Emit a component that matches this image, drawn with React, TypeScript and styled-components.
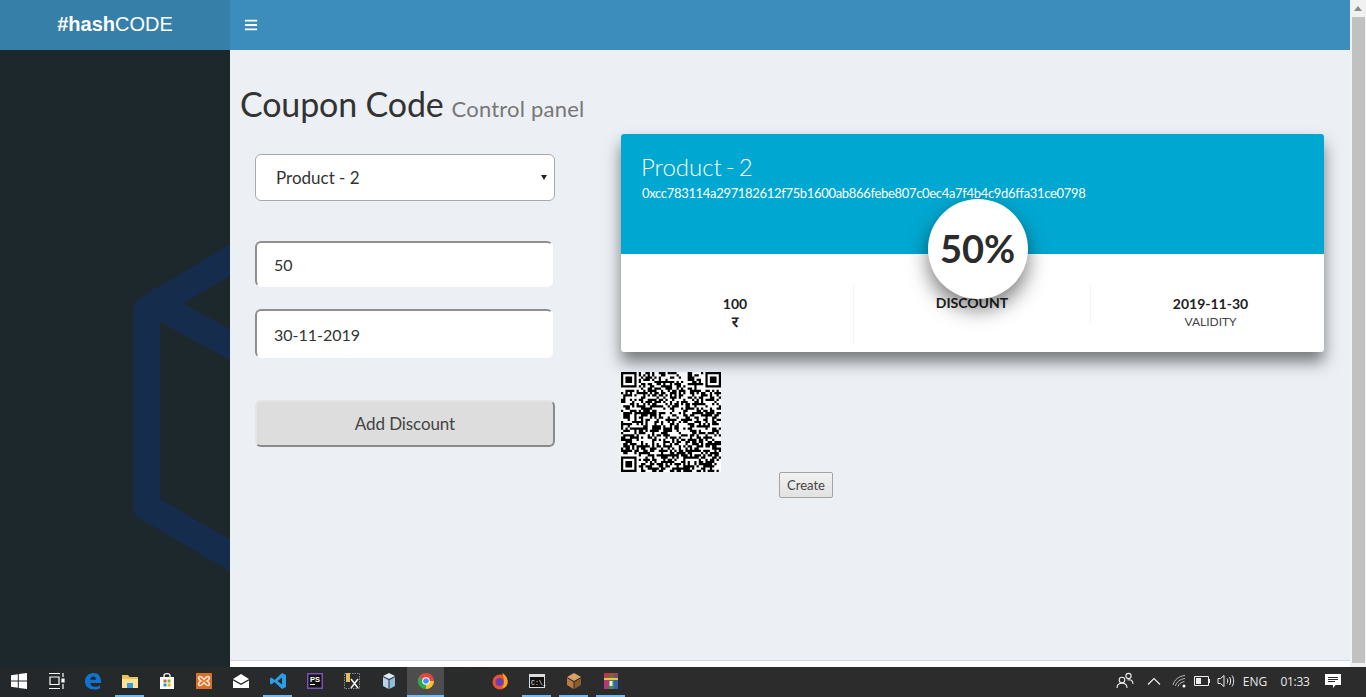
import React from 'react';
import styled, { createGlobalStyle } from 'styled-components';
import { FaBars } from 'react-icons/fa';

const GlobalStyle = createGlobalStyle`
  html, body {
    margin: 0;
    padding: 0;
    overflow: hidden;
  }
  * {
    box-sizing: border-box;
  }
  body {
    font-family: 'Lato', 'Liberation Sans', sans-serif;
    color: #333;
  }
`;

const Page = styled.div`
  display: flex;
  flex-direction: column;
  width: 1366px;
  height: 697px;
  overflow: hidden;
`;

const Screen = styled.div`
  display: flex;
  flex: 1;
  min-height: 0;
`;

const Viewport = styled.div`
  display: flex;
  flex: 1;
  flex-direction: column;
  min-width: 0;
`;

const Header = styled.header`
  display: flex;
  flex: 0 0 50px;
  background: #3c8dbc;
`;

const Logo = styled.div`
  flex: 0 0 230px;
  background: #367fa9;
  color: #fff;
  font-family: 'Liberation Sans', Arial, sans-serif;
  font-size: 20px;
  line-height: 49px;
  text-align: center;
  b {
    font-weight: 700;
  }
`;

const MenuToggle = styled.div`
  display: flex;
  align-items: center;
  padding-left: 14px;
  color: #fff;
  font-size: 14px;
`;

const Body = styled.div`
  display: flex;
  flex: 1;
  min-height: 0;
`;

const Sidebar = styled.aside`
  position: relative;
  flex: 0 0 230px;
  overflow: hidden;
  background: #1d282d;
`;

const SidebarMark = styled.svg`
  position: absolute;
  top: -50px;
  left: 0;
`;

const Main = styled.main`
  display: flex;
  flex: 1;
  flex-direction: column;
  min-width: 0;
  background: #ecf0f5;
`;

const Content = styled.section`
  flex: 1;
  padding: 34px 26px 0 10px;
`;

const Title = styled.h1`
  margin: 0;
  height: 50px;
  color: #333;
  font-size: 34px;
  font-weight: 400;
  letter-spacing: -0.15px;
  line-height: 40px;
  small {
    margin-left: 8px;
    color: #777;
    font-size: 22px;
    font-weight: 400;
    letter-spacing: 0.2px;
  }
`;

const Columns = styled.div`
  display: flex;
`;

const FormColumn = styled.div`
  flex: 0 0 381px;
  padding: 20px 0 0 15px;
`;

const SelectWrap = styled.div`
  position: relative;
  width: 300px;
  &::after {
    content: '';
    position: absolute;
    top: 21px;
    right: 8px;
    border-top: 5px solid #222;
    border-left: 3px solid transparent;
    border-right: 3px solid transparent;
    pointer-events: none;
  }
`;

const ProductSelect = styled.select`
  display: block;
  width: 100%;
  height: 47px;
  padding: 0 20px;
  border: 1px solid #a9a9a9;
  border-radius: 6px;
  background: #fff;
  color: #333;
  font-family: inherit;
  font-size: 17px;
  appearance: none;
`;

const TextInput = styled.input<{ $height: number; $top: number; $nudge?: number }>`
  display: block;
  width: 298px;
  height: ${({ $height }) => $height}px;
  margin-top: ${({ $top }) => $top}px;
  padding: ${({ $nudge }) => $nudge ?? 0}px 17px 0;
  border-width: 2px;
  border-style: solid;
  border-color: #8f8f8f #fff #fff #8f8f8f;
  border-radius: 6px;
  background: #fff;
  color: #333;
  font-family: inherit;
  font-size: 16px;
  outline: none;
`;

const SubmitButton = styled.button`
  display: block;
  width: 300px;
  height: 47px;
  margin-top: 42px;
  padding: 0;
  border-width: 2px;
  border-style: solid;
  border-color: #e4e4e4 #8a8a8a #8a8a8a #e4e4e4;
  border-radius: 6px;
  background: #dddddd;
  color: #444;
  font-family: inherit;
  font-size: 17px;
  letter-spacing: -0.1px;
`;

const CouponColumn = styled.div`
  flex: 0 0 703px;
`;

const Card = styled.article`
  position: relative;
  height: 218px;
  border-radius: 3px;
  background: #fff;
  box-shadow: 0 10px 16px rgba(0, 0, 0, 0.5);
`;

const CardTop = styled.div`
  height: 120px;
  padding: 19px 21px;
  border-radius: 3px 3px 0 0;
  background: #00a7d0;
  color: #fff;
`;

const CardName = styled.h3`
  margin: 0 0 5px -1px;
  font-size: 24px;
  font-weight: 300;
  line-height: 28px;
  word-spacing: -2.5px;
`;

const CardHash = styled.h5`
  margin: 0;
  font-size: 13px;
  font-weight: 400;
  letter-spacing: -0.32px;
  line-height: 15px;
`;

const DiscountBadge = styled.div`
  position: absolute;
  top: 65px;
  left: 50%;
  display: flex;
  align-items: center;
  justify-content: center;
  width: 100px;
  height: 100px;
  margin-left: -45px;
  padding-bottom: 3px;
  border-radius: 50%;
  background: #fff;
  box-shadow: 0 10px 20px rgba(0, 0, 0, 0.5);
  color: #2b2b2b;
  font-size: 38px;
  font-weight: 700;
`;

const CardStats = styled.div`
  display: flex;
  align-items: flex-start;
  padding-top: 31px;
`;

const Stat = styled.div<{ $divider?: boolean; $height: number; $width: number; $left?: number; $right?: number }>`
  flex: 0 0 ${({ $width }) => $width}px;
  height: ${({ $height }) => $height}px;
  padding: 0 ${({ $right }) => $right ?? 0}px 0 ${({ $left }) => $left ?? 0}px;
  border-right: ${({ $divider }) => ($divider ? '1px solid #f4f4f4' : 'none')};
  text-align: center;
`;

const StatValue = styled.h5`
  margin: 11px 0 0;
  color: #222;
  font-size: 14px;
  font-weight: 700;
  line-height: 16px;
`;

const DiscountValue = styled(StatValue)`
  margin-top: 10px;
`;

const StatLabel = styled.span`
  display: block;
  margin-top: 1px;
  color: #444;
  font-size: 12px;
  line-height: 18px;
`;

const Currency = styled(StatLabel)`
  margin-top: 0;
  color: #222;
  font-size: 15px;
  font-weight: 700;
`;

const QrRow = styled.div`
  display: flex;
  align-items: flex-start;
  margin-top: 20px;
`;

const CreateButton = styled.button`
  width: 54px;
  height: 26px;
  margin: 100px 0 0 58px;
  padding: 0;
  border: 1px solid #a4a4a4;
  border-radius: 2px;
  background: linear-gradient(#f2f2f2, #e2e2e2);
  color: #444;
  font-family: inherit;
  font-size: 13px;
`;

const Footer = styled.footer`
  flex: 0 0 7px;
  border-top: 1px solid #d2d6de;
  background: #fff;
`;

const Scrollbar = styled.div`
  display: flex;
  flex: 0 0 16px;
  flex-direction: column;
  align-items: center;
  background: #f1f1f1;
`;

const ScrollArrow = styled.div`
  flex: 0 0 17px;
  padding-top: 6px;
  &::before {
    content: '';
    display: block;
    border-bottom: 5px solid #8a8a8a;
    border-left: 4px solid transparent;
    border-right: 4px solid transparent;
  }
`;

const ScrollThumb = styled.div`
  flex: 1;
  width: 13px;
  margin-bottom: 4px;
  background: #c1c1c1;
`;

const Taskbar = styled.div`
  display: flex;
  flex: 0 0 30px;
  align-items: stretch;
  background: linear-gradient(90deg, #24282a, #2c2c2c 40%);
  color: #e8e8e8;
`;

const TaskButton = styled.div<{ $active?: boolean; $open?: boolean }>`
  position: relative;
  display: flex;
  flex: 0 0 37px;
  align-items: center;
  justify-content: center;
  padding-bottom: 2px;
  background: ${({ $active }) => ($active ? '#4d4d4d' : 'transparent')};
  &::after {
    content: '';
    position: absolute;
    bottom: 0;
    left: ${({ $active }) => ($active ? '0' : '4px')};
    right: ${({ $active }) => ($active ? '0' : '4px')};
    height: 2px;
    background: ${({ $active, $open }) => ($active || $open ? '#76b9ed' : 'transparent')};
  }
`;

const Tray = styled.div`
  display: flex;
  align-items: center;
  margin-left: auto;
  padding: 0 18px 2px 0;
  font-family: 'Open Sans', 'Liberation Sans', sans-serif;
  font-size: 12px;
`;

const TrayIcon = styled.div<{ $width: number }>`
  display: flex;
  flex: 0 0 ${({ $width }) => $width}px;
  align-items: center;
  justify-content: center;
`;

const TrayText = styled.span<{ $width: number }>`
  flex: 0 0 ${({ $width }) => $width}px;
  text-align: center;
`;

const TrayClock = styled(TrayText)`
  letter-spacing: -0.3px;
`;

const icon = { width: 18, height: 18, viewBox: '0 0 18 18' };

const WindowsIcon = () => (
  <svg {...icon} fill="#fff">
    <path d="M1 3.2 7.8 2.2V8.5H1ZM8.8 2 17 1V8.5H8.8ZM1 9.5H7.8V15.8L1 14.8ZM8.8 9.5H17V17L8.8 16Z" />
  </svg>
);

const TaskViewIcon = () => (
  <svg {...icon} fill="none" stroke="#fff" strokeWidth="1.2">
    <path d="M2 1.5H13M2 16.5H13M3 5H12V12.5H3Z" />
    <path d="M16 1V5M16 12V17" />
    <path d="M15 7H17V10H15Z" fill="#fff" />
  </svg>
);

const EdgeIcon = () => (
  <svg {...icon}>
    <path
      fill="#1173cf"
      d="M1 9.5C1 4.5 4.5 1 9.5 1 14 1 17 4.3 17 9.5V11H6.2C6.5 13.6 8.4 14.8 10.8 14.8 12.8 14.8 14.5 14.2 16 13.2V16.2C14.5 17 12.6 17.5 10.3 17.5 4.6 17.5 1 14.4 1 9.5ZM6.2 7.8H12C12 5.8 11 4.6 9.2 4.6 7.5 4.6 6.5 5.9 6.2 7.8Z"
    />
  </svg>
);

const FolderIcon = () => (
  <svg {...icon}>
    <path fill="#e8c25a" d="M1 3H7L8.5 5H17V16H1Z" />
    <path fill="#fbe39a" d="M1 7H17V16H1Z" />
    <path fill="#3f9bd6" d="M6 11H12V16H6Z" />
  </svg>
);

const StoreIcon = () => (
  <svg {...icon}>
    <path fill="none" stroke="#fff" strokeWidth="1.3" d="M6 5V3.5C6 1 12 1 12 3.5V5" />
    <path fill="#fff" d="M2 5H16V17H2Z" />
    <path fill="#e8562a" d="M5.5 7.5H8.5V10.5H5.5Z" />
    <path fill="#7cb82f" d="M9.5 7.5H12.5V10.5H9.5Z" />
    <path fill="#1a9be0" d="M5.5 11.5H8.5V14.5H5.5Z" />
    <path fill="#f7b500" d="M9.5 11.5H12.5V14.5H9.5Z" />
  </svg>
);

const XamppIcon = () => (
  <svg {...icon}>
    <path fill="#d9702a" d="M1 1H17V17H1Z" />
    <path
      fill="none"
      stroke="#fbe3cf"
      strokeWidth="1.6"
      d="M5 4.5C7 4.5 7.5 6 9 7.5 10.5 6 11 4.5 13 4.5 15 4.5 15 7.5 12 9 15 10.5 15 13.5 13 13.5 11 13.5 10.5 12 9 10.5 7.5 12 7 13.5 5 13.5 3 13.5 3 10.5 6 9 3 7.5 3 4.5 5 4.5Z"
    />
  </svg>
);

const MailIcon = () => (
  <svg {...icon} fill="#fff">
    <path d="M1 7 9 2 17 7 9 11.5Z" />
    <path d="M1 8.5 9 13 17 8.5V16H1Z" />
  </svg>
);

const CodeIcon = () => (
  <svg {...icon}>
    <path fill="#2b9fe6" d="M13 1 17 3V15L13 17 5.5 10 2.5 12.5 1 11.5V6.5L2.5 5.5 5.5 8ZM13 5.5 8.5 9 13 12.5Z" />
  </svg>
);

const StormIcon = () => (
  <svg {...icon}>
    <path fill="#7a4fb8" d="M1 1H17V17H1Z" />
    <path fill="#111" d="M2.5 2.5H15.5V15.5H2.5Z" />
    <text x="4" y="10" fill="#fff" fontFamily="Liberation Sans" fontSize="7.5" fontWeight="700">
      PS
    </text>
    <path fill="#fff" d="M4 12H9V13H4Z" />
  </svg>
);

const ToolsIcon = () => (
  <svg {...icon}>
    <path fill="none" stroke="#888" strokeDasharray="1.5 1" d="M1.5 1.5H16.5V16.5H1.5Z" />
    <path fill="#e2bf5f" d="M3 1H7V10H3Z" />
    <path stroke="#eee" strokeWidth="1.6" d="M8 7 15 16M15 7 8 16" />
  </svg>
);

const CubeIcon = () => (
  <svg {...icon}>
    <path fill="#dbeaf5" d="M9 1 15 4 9 7 3 4Z" />
    <path fill="#b5d4ea" d="M3 5 8.5 8V17L3 14Z" />
    <path fill="#8dbcdc" d="M15 5 9.5 8V17L15 14Z" />
  </svg>
);

const ChromeIcon = () => (
  <svg {...icon}>
    <circle cx="9" cy="9" r="8" fill="#e2493b" />
    <path fill="#31a853" d="M9 17A8 8 0 0 1 2 5L9 9Z" />
    <path fill="#f7c52b" d="M9 9 17 9A8 8 0 0 1 9 17Z" />
    <circle cx="9" cy="9" r="3.8" fill="#fff" />
    <circle cx="9" cy="9" r="2.8" fill="#4a8af4" />
  </svg>
);

const FirefoxIcon = () => (
  <svg {...icon}>
    <circle cx="9" cy="10" r="7.5" fill="#e8552d" />
    <path fill="#f9a51e" d="M11 1C15 3 17.5 7 16.5 11.5 15.5 15 13 16 11 16 14 13 13.5 6 11 1Z" />
    <circle cx="8.5" cy="10" r="4" fill="#6a3fb5" />
  </svg>
);

const ConsoleIcon = () => (
  <svg {...icon}>
    <path fill="#dcdcdc" d="M1 2H17V16H1Z" />
    <path fill="#111" d="M2 5H16V15H2Z" />
    <text x="3" y="12.5" fill="#e8e8e8" fontFamily="Liberation Mono" fontSize="6.5">
      C:\_
    </text>
  </svg>
);

const BoxIcon = () => (
  <svg {...icon}>
    <path fill="#d9a066" d="M9 1 16 5 9 9 2 5Z" />
    <path fill="#b97a42" d="M2 6 8.5 10V17L2 13Z" />
    <path fill="#8e5a2e" d="M16 6 9.5 10V17L16 13Z" />
  </svg>
);

const RarIcon = () => (
  <svg {...icon}>
    <path fill="#b03a7a" d="M2 1H7V17H2Z" />
    <path fill="#3c8f4a" d="M7 1H12V17H7Z" />
    <path fill="#3a5fb0" d="M12 1H16V17H12Z" />
    <path fill="#c0392b" d="M2 1H16V5H2Z" opacity="0.6" />
    <path fill="#f0c040" d="M2 6H16V8H2Z" />
    <path fill="#e8e8e8" d="M7.5 9H10.5V14H7.5Z" />
  </svg>
);

const PeopleIcon = () => (
  <svg width="20" height="20" viewBox="0 0 20 20" fill="none" stroke="#eee" strokeWidth="1.1">
    <circle cx="7" cy="9" r="2.8" />
    <path d="M2 17C2 13.5 4 12.2 7 12.2S12 13.5 12 17" />
    <circle cx="13.5" cy="5" r="2.6" />
    <path d="M12.5 9C15.5 8 18 9.5 18 13" />
  </svg>
);

const ChevronIcon = () => (
  <svg width="14" height="8" viewBox="0 0 14 8" fill="none" stroke="#eee" strokeWidth="1.2">
    <path d="M1 7.5 7 1.5 13 7.5" />
  </svg>
);

const WifiIcon = () => (
  <svg width="16" height="14" viewBox="0 0 16 14" fill="none" stroke="#bbb" strokeWidth="1">
    <path d="M1 11C2 6 7 2 13 1.5M3.5 12C4 8.5 8 5 13 4.5M6 12.5C6.5 10.5 9 8 12.5 7.5" />
    <circle cx="12" cy="12" r="1.5" fill="#fff" stroke="none" />
  </svg>
);

const BatteryIcon = () => (
  <svg width="16" height="10" viewBox="0 0 16 10">
    <path fill="none" stroke="#eee" d="M.5.5H14.5V9.5H.5Z" />
    <path fill="#eee" d="M2 2H7V8H2ZM15 3H16V7H15Z" />
  </svg>
);

const VolumeIcon = () => (
  <svg width="18" height="14" viewBox="0 0 18 14" fill="none" stroke="#eee" strokeWidth="1">
    <path d="M1 4.5H3.5L7 1.5V12.5L3.5 9.5H1Z" />
    <path d="M10 4.5C11 6 11 8 10 9.5M12.5 3C14 5.5 14 8.5 12.5 11M15 1.5C17.2 4.5 17.2 9.5 15 12.5" />
  </svg>
);

const NotificationIcon = () => (
  <svg width="16" height="16" viewBox="0 0 16 16">
    <path fill="#fff" d="M0 1H16V12H10.5L8 15 8 12H0Z" />
    <path stroke="#2b2b2b" d="M3 4.5H13M3 6.5H13M3 8.5H10" />
  </svg>
);

const QR_SIZE = 45;

// true/false inside a finder pattern and its quiet edge, null everywhere else
const finderAt = (x: number, y: number, ox: number, oy: number) => {
  const dx = x - ox;
  const dy = y - oy;
  if (dx < -1 || dy < -1 || dx > 7 || dy > 7) return null;
  if (dx === -1 || dy === -1 || dx === 7 || dy === 7) return false;
  return Math.min(dx, dy, 6 - dx, 6 - dy) !== 1;
};

const buildQrPath = () => {
  let seed = 48271;
  let path = '';
  for (let y = 0; y < QR_SIZE; y++) {
    for (let x = 0; x < QR_SIZE; x++) {
      seed = (seed * 16807) % 2147483647;
      const last = QR_SIZE - 7;
      const finder = finderAt(x, y, 0, 0) ?? finderAt(x, y, last, 0) ?? finderAt(x, y, 0, last);
      const dark = finder ?? seed % 100 < 52;
      if (dark) path += `M${x} ${y}h1v1h-1z`;
    }
  }
  return path;
};

const qrPath = buildQrPath();

const taskItems = [
  { key: 'start', node: <WindowsIcon /> },
  { key: 'tasks', node: <TaskViewIcon /> },
  { key: 'edge', node: <EdgeIcon /> },
  { key: 'folder', node: <FolderIcon />, open: true },
  { key: 'store', node: <StoreIcon /> },
  { key: 'xampp', node: <XamppIcon /> },
  { key: 'mail', node: <MailIcon /> },
  { key: 'code', node: <CodeIcon />, open: true },
  { key: 'storm', node: <StormIcon /> },
  { key: 'tools', node: <ToolsIcon /> },
  { key: 'cube', node: <CubeIcon /> },
  { key: 'chrome', node: <ChromeIcon />, active: true },
  { key: 'gap', node: null },
  { key: 'firefox', node: <FirefoxIcon /> },
  { key: 'console', node: <ConsoleIcon />, open: true },
  { key: 'box', node: <BoxIcon />, open: true },
  { key: 'rar', node: <RarIcon />, open: true },
];

export default function App() {
  return (
    <Page>
      <GlobalStyle />
      <Screen>
        <Viewport>
          <Header>
            <Logo>
              <b>#hash</b>CODE
            </Logo>
            <MenuToggle>
              <FaBars />
            </MenuToggle>
          </Header>
          <Body>
            <Sidebar>
              <SidebarMark width="230" height="667" viewBox="0 0 230 667" fill="none">
                <path
                  d="M245 251 146.5 310V507L245 564M245 353 146.5 299"
                  stroke="#152c4d"
                  strokeWidth="27"
                  strokeLinejoin="round"
                />
              </SidebarMark>
            </Sidebar>
            <Main>
              <Content>
                <Title>
                  Coupon Code<small>Control panel</small>
                </Title>
                <Columns>
                  <FormColumn>
                    <SelectWrap>
                      <ProductSelect defaultValue="2">
                        <option value="1">Product - 1</option>
                        <option value="2">Product - 2</option>
                      </ProductSelect>
                    </SelectWrap>
                    <TextInput $top={40} $height={46} defaultValue="50" />
                    <TextInput $top={22} $height={49} $nudge={2} defaultValue="30-11-2019" />
                    <SubmitButton>Add Discount</SubmitButton>
                  </FormColumn>
                  <CouponColumn>
                    <Card>
                      <CardTop>
                        <CardName>Product - 2</CardName>
                        <CardHash>0xcc783114a297182612f75b1600ab866febe807c0ec4a7f4b4c9d6ffa31ce0798</CardHash>
                      </CardTop>
                      <DiscountBadge>50%</DiscountBadge>
                      <CardStats>
                        <Stat $divider $width={233} $height={58} $right={4}>
                          <StatValue>100</StatValue>
                          <Currency>र</Currency>
                        </Stat>
                        <Stat $divider $width={237} $height={38}>
                          <DiscountValue>DISCOUNT</DiscountValue>
                        </Stat>
                        <Stat $width={233} $height={58} $left={6}>
                          <StatValue>2019-11-30</StatValue>
                          <StatLabel>VALIDITY</StatLabel>
                        </Stat>
                      </CardStats>
                    </Card>
                    <QrRow>
                      <svg width="100" height="100" viewBox={`0 0 ${QR_SIZE} ${QR_SIZE}`}>
                        <rect width={QR_SIZE} height={QR_SIZE} fill="#fff" />
                        <path d={qrPath} fill="#000" />
                      </svg>
                      <CreateButton>Create</CreateButton>
                    </QrRow>
                  </CouponColumn>
                </Columns>
              </Content>
              <Footer />
            </Main>
          </Body>
        </Viewport>
        <Scrollbar>
          <ScrollArrow />
          <ScrollThumb />
        </Scrollbar>
      </Screen>
      <Taskbar>
        {taskItems.map((item) => (
          <TaskButton key={item.key} $active={item.active} $open={item.open}>
            {item.node}
          </TaskButton>
        ))}
        <Tray>
          <TrayIcon $width={26}>
            <PeopleIcon />
          </TrayIcon>
          <TrayIcon $width={32}>
            <ChevronIcon />
          </TrayIcon>
          <TrayIcon $width={20}>
            <WifiIcon />
          </TrayIcon>
          <TrayIcon $width={24}>
            <BatteryIcon />
          </TrayIcon>
          <TrayIcon $width={24}>
            <VolumeIcon />
          </TrayIcon>
          <TrayText $width={34}>ENG</TrayText>
          <TrayClock $width={46}>01:33</TrayClock>
          <TrayIcon $width={30}>
            <NotificationIcon />
          </TrayIcon>
        </Tray>
      </Taskbar>
    </Page>
  );
}
